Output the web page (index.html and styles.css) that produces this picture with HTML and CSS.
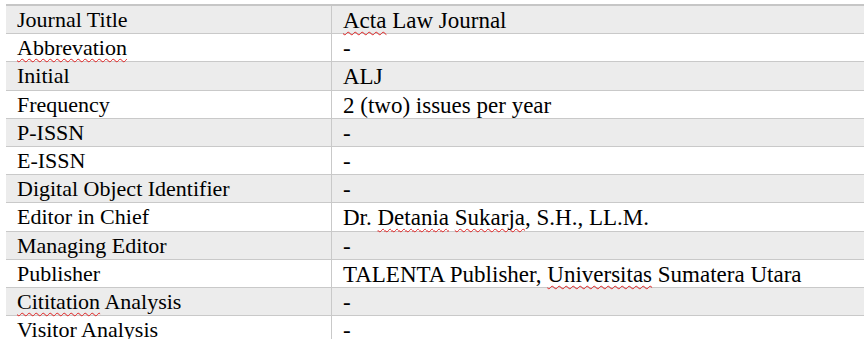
FILE: index.html
```html
<!DOCTYPE html>
<html>
<head>
<meta charset="utf-8">
<link rel="stylesheet" href="styles.css">
</head>
<body>
<table class="info">
  <tr class="shade"><td class="key">Journal Title</td><td class="val"><span class="sp">Acta</span> Law Journal</td></tr>
  <tr><td class="key"><span class="sp">Abbrevation</span></td><td class="val">-</td></tr>
  <tr class="shade"><td class="key">Initial</td><td class="val">ALJ</td></tr>
  <tr><td class="key">Frequency</td><td class="val">2 (two) issues per year</td></tr>
  <tr class="shade"><td class="key">P-ISSN</td><td class="val">-</td></tr>
  <tr><td class="key">E-ISSN</td><td class="val">-</td></tr>
  <tr class="shade"><td class="key">Digital Object Identifier</td><td class="val">-</td></tr>
  <tr><td class="key">Editor in Chief</td><td class="val">Dr. <span class="sp">Detania</span> <span class="sp">Sukarja</span>, S.H., LL.M.</td></tr>
  <tr class="shade"><td class="key">Managing Editor</td><td class="val">-</td></tr>
  <tr><td class="key">Publisher</td><td class="val">TALENTA Publisher, <span class="sp">Universitas</span> Sumatera Utara</td></tr>
  <tr class="shade"><td class="key"><span class="sp">Cititation</span> Analysis</td><td class="val">-</td></tr>
  <tr><td class="key">Visitor Analysis</td><td class="val">-</td></tr>
</table>
</body>
</html>
```

FILE: styles.css
```css
html, body {
  margin: 0;
  padding: 0;
  background: #ffffff;
}
body {
  padding: 4px 0 0 6px;
  font-family: "Liberation Serif", "Times New Roman", serif;
  font-size: 22px;
  color: #000;
}
.info {
  border-collapse: collapse;
  border-spacing: 0;
  width: 858px;
  table-layout: fixed;
  border-top: 2px solid #c6c6c6;
}
.info td {
  height: 27.2px;
  line-height: 27.2px;
  padding: 0 11px;
  border-bottom: 1px solid #c9c9c9;
  white-space: nowrap;
  vertical-align: top;
  box-sizing: content-box;
}
.info td.key {
  width: 303px;
  border-right: 1px solid #c9c9c9;
}
.info td.val {
  font-size: 23px;
  padding-top: 3px;
  height: 24.2px;
  line-height: 24.2px;
}
.info tr.shade td {
  background: #ececec;
}
.sp {
  text-decoration: underline wavy #e02020;
  text-decoration-thickness: 1px;
  text-underline-offset: 3px;
  text-decoration-skip-ink: none;
}
```
